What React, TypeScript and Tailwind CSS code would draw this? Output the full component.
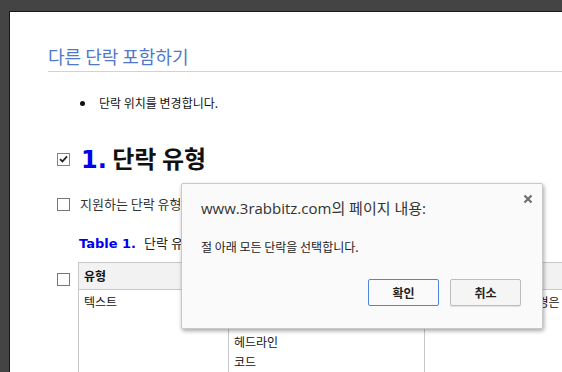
import React from 'react';

const ko = { fontFamily: '"Noto Sans CJK KR", "Noto Sans", sans-serif' };

const Box = ({ checked = false }: { checked?: boolean }) => (
    <span
        className={`flex h-[13px] w-[13px] shrink-0 items-center justify-center border bg-white ${checked ? 'border-[#3d96e8]' : 'border-[#767676]'}`}
    >
        {checked && (
            <svg width="9" height="8" viewBox="0 0 9 8">
                <path d="M1 4.2 L3.4 6.5 L8 1.3" fill="none" stroke="#222" strokeWidth="1.8" />
            </svg>
        )}
    </span>
);

const App = () => {
    return (
        <div className="relative flex h-[372px] w-[562px] overflow-hidden bg-[#444444] pl-[9px] pt-[11px]" style={ko}>
            <div className="flex-1 border-l border-t border-[#1c1616] bg-white pl-[38px] pt-[31px]">
                <h2 className="w-[600px] border-b border-[#d2d2d2] pb-[2px] text-[18px] leading-[26px] text-[#4f78c9]">
                    다른 단락 포함하기
                </h2>

                <ul className="mt-[22px] pl-[32px] text-[12px] leading-[18px] text-[#111]">
                    <li className="flex items-center gap-[14px]">
                        <span className="h-[5px] w-[5px] rounded-full bg-[#111]" />
                        단락 위치를 변경합니다.
                    </li>
                </ul>

                <div className="mt-[30px] flex items-center gap-[11px] pl-[9px]">
                    <Box checked />
                    <h1 className="text-[24px] font-bold leading-[32px] text-[#111]">
                        <span className="text-[#0000ee]" style={{ fontFamily: '"DejaVu Sans", sans-serif' }}>1.</span> 단락 유형
                    </h1>
                </div>

                <div className="mt-[18px] flex items-center gap-[10px] pl-[9px] text-[13px] leading-[20px] text-[#333]">
                    <Box />
                    <span className="w-[100px] overflow-hidden whitespace-nowrap">지원하는 단락 유형은 다음과 같습니다.</span>
                </div>

                <div className="mt-[19px] pl-[31px] text-[13px] leading-[20px] text-[#222]">
                    <span className="font-bold text-[#0000ee]" style={{ fontFamily: '"DejaVu Sans", sans-serif' }}>Table 1.</span>
                    <span className="ml-[8px]">단락 유형</span>
                </div>

                <div className="mt-[8px] flex items-start gap-[8px] pl-[9px]">
                    <div className="pt-[11px]">
                        <Box />
                    </div>
                    <table className="w-[560px] table-fixed border-collapse text-[12px] leading-[20px] text-[#111]">
                        <colgroup>
                            <col className="w-[150px]" />
                            <col className="w-[196px]" />
                            <col />
                        </colgroup>
                        <thead>
                            <tr className="bg-[#f2f2f2]">
                                <th className="h-[27px] border border-[#c8c8c8] px-[5px] text-left font-bold">유형</th>
                                <th className="border border-[#c8c8c8] px-[5px] text-left font-bold">종류</th>
                                <th className="border border-[#c8c8c8] px-[5px] text-left font-bold">설명</th>
                            </tr>
                        </thead>
                        <tbody>
                            <tr>
                                <td className="border border-[#c8c8c8] px-[5px] pt-[2px] align-top">텍스트</td>
                                <td className="border border-[#c8c8c8] px-[5px] pt-[2px] align-top">
                                    <div>본문</div>
                                    <div>제목</div>
                                    <div>헤드라인</div>
                                    <div>코드</div>
                                </td>
                                <td className="border border-[#c8c8c8] px-[5px] pt-[2px] align-top">
                                    단락 유형의 모양과 배경은 스타일로 정합니다.
                                </td>
                            </tr>
                        </tbody>
                    </table>
                </div>
            </div>

            <div className="absolute left-[181px] top-[183px] h-[146px] w-[362px] rounded-[2px] border border-[#c9c9c9] bg-[#fafafa] shadow-[1px_2px_4px_rgba(0,0,0,0.35)]">
                <button className="absolute right-[9px] top-[10px] text-[#777]">
                    <svg width="10" height="10" viewBox="0 0 10 10">
                        <path d="M1.5 1.5 L8.5 8.5 M8.5 1.5 L1.5 8.5" stroke="#6f6f6f" strokeWidth="2.2" />
                    </svg>
                </button>
                <div className="pl-[19px] pt-[13px]">
                    <p className="text-[15px] leading-[22px] text-[#333]" style={{ fontFamily: '"Open Sans", "Noto Sans CJK KR", sans-serif' }}>
                        www.3rabbitz.com의 페이지 내용:
                    </p>
                    <p className="mt-[19px] text-[12px] leading-[18px] text-[#222]">절 아래 모든 단락을 선택합니다.</p>
                </div>
                <div className="absolute left-[186px] top-[95px] flex gap-[11px]">
                    <button className="h-[27px] w-[71px] rounded-[2px] border border-[#4d86e0] bg-[#fafafa] text-[12px] font-bold text-[#222]">
                        확인
                    </button>
                    <button className="h-[27px] w-[71px] rounded-[2px] border border-[#bdbdbd] bg-[#f5f5f5] text-[12px] font-bold text-[#222] shadow-[0_1px_1px_rgba(0,0,0,0.1)]">
                        취소
                    </button>
                </div>
            </div>
        </div>
    );
};

export default App;
